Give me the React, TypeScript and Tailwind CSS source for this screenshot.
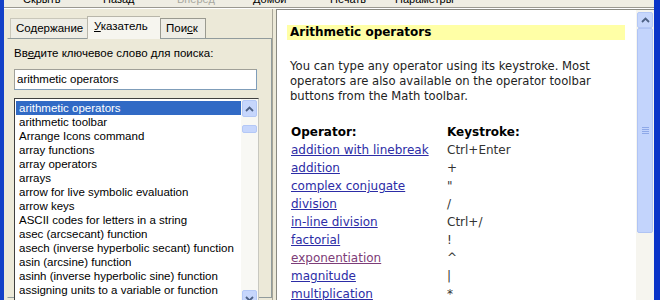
import React from "react";

const items = [
  "arithmetic operators",
  "arithmetic toolbar",
  "Arrange Icons command",
  "array functions",
  "array operators",
  "arrays",
  "arrow for live symbolic evaluation",
  "arrow keys",
  "ASCII codes for letters in a string",
  "asec (arcsecant) function",
  "asech (inverse hyperbolic secant) function",
  "asin (arcsine) function",
  "asinh (inverse hyperbolic sine) function",
  "assigning units to a variable or function",
  "assigning values to a variable or function",
];

const ops: [string, string, boolean?][] = [
  ["addition with linebreak", "Ctrl+Enter"],
  ["addition", "+"],
  ["complex conjugate", "\""],
  ["division", "/"],
  ["in-line division", "Ctrl+/"],
  ["factorial", "!"],
  ["exponentiation", "^", true],
  ["magnitude", "|"],
  ["multiplication", "*"],
];

function UpArrow() {
  return (
    <svg width="9" height="6" viewBox="0 0 9 6">
      <path d="M1 5 L4.5 1.5 L8 5" fill="none" stroke="#4d6185" strokeWidth="1.8" />
    </svg>
  );
}
function DownArrow() {
  return (
    <svg width="9" height="6" viewBox="0 0 9 6">
      <path d="M1 1 L4.5 4.5 L8 1" fill="none" stroke="#4d6185" strokeWidth="1.8" />
    </svg>
  );
}

export default function App() {
  return (
    <div className="w-[660px] h-[300px] overflow-hidden flex bg-[#0a3fd0]">
      <div className="w-[4px] shrink-0 bg-[#1441c8]" />
      <div className="flex-1 flex flex-col bg-[#ece9d8] overflow-hidden">
        {/* toolbar */}
        <div className="h-[8px] shrink-0 overflow-hidden bg-[#efede3] border-b border-[#9a9890]">
          <div className="flex mt-[-8px] leading-[14px] text-[11px] text-black font-['Liberation_Sans',sans-serif] pl-[19px]">
            <span className="w-[80px]">Скрыть</span>
            <span className="w-[74px]">Назад</span>
            <span className="w-[76px] text-[#a8a8a0]">Вперед</span>
            <span className="w-[77px]">Домой</span>
            <span className="w-[65px]">Печать</span>
            <span>Параметры</span>
          </div>
        </div>
        <div className="flex-1 flex min-h-0 border-t border-white">
          {/* left pane */}
          <div className="w-[268px] shrink-0 pl-[3px] pt-[7px] font-['Liberation_Sans',sans-serif] text-[11.5px] text-black">
            {/* tabs */}
            <div className="flex items-end h-[22px] pl-[3px]">
              <div className="h-[20px] w-[77px] flex items-center pl-[5px] border-t border-l border-[#c9c7ba] bg-[#eeede5]">
                Содержание
              </div>
              <div className="h-[23px] w-[73px] flex items-center pl-[6px] pb-[3px] bg-[#f6f5ef] border-t border-l border-[#b8b6aa] relative top-[1px] z-10">
                <span><span className="underline">У</span>казатель</span>
              </div>
              <div className="h-[20px] w-[46px] flex items-center pl-[5px] border-t border-l border-r border-[#9a9a90] bg-[#eeede5]">
                <span>Пои<span className="underline">с</span>к</span>
              </div>
            </div>
            <div className="border border-[#919b9c] border-l-[#ece9d8] h-[260px] pl-[6px] pr-[8px] pt-[7px]">
              <div className="h-[14px] leading-[14px]">
                Вв<span className="underline">е</span>дите ключевое слово для поиска:
              </div>
              <div className="mt-[9px] w-[243px] h-[21px] bg-white border border-[#7f9db9] border-t-[#a0a098] border-l-[#a0a098] pl-[2px] leading-[19px]">
                arithmetic operators
              </div>
              <div className="mt-[8px] w-[245px] h-[210px] bg-white border border-[#404040] border-r-[#c8c8c0] border-b-[#c8c8c0] flex">
                <div className="flex-1 pl-[1px] pt-[2px]">
                  {items.map((t, i) => (
                    <div
                      key={i}
                      className={
                        i === 0
                          ? "h-[14px] leading-[14px] pl-[3px] bg-[#316ac5] text-white"
                          : "h-[14px] leading-[14px] pl-[3px] whitespace-nowrap"
                      }
                    >
                      {t}
                    </div>
                  ))}
                </div>
                <div className="w-[17px] shrink-0 bg-[#f8f8f4] flex flex-col pt-[1px]">
                  <div className="h-[17px] mx-[1px] rounded-[2px] bg-[#c6d6fc] border border-[#b4c8f6] flex items-center justify-center">
                    <UpArrow />
                  </div>
                  <div className="h-[8px] mt-[8px] mx-[1px] rounded-[2px] bg-[#c6d6fc] border border-[#b4c8f6]" />
                  <div className="flex-1" />
                  <div className="h-[17px] mx-[1px] rounded-[2px] bg-[#c6d6fc] border border-[#b4c8f6] flex items-center justify-center">
                    <DownArrow />
                  </div>
                </div>
              </div>
            </div>
          </div>
          {/* splitter */}
          <div className="w-[4px] shrink-0 border-l border-[#a8a698]" />
          {/* right pane */}
          <div className="flex-1 flex border-l border-t border-[#8a8a82] bg-white min-w-0">
            <div className="flex-1 pl-[10px] pr-[11px] pt-[15px] font-['DejaVu_Sans',sans-serif] text-[12px] text-black">
              <div className="bg-[#ffffa6] h-[15px] leading-[15px] pl-[3px] font-bold">Arithmetic operators</div>
              <div className="mt-[19px] pl-[3px] w-[335px] leading-[15px] text-[11.6px] text-[#222]">
                You can type any operator using its keystroke. Most operators are also available on the operator toolbar buttons from the Math toolbar.
              </div>
              <div className="mt-[19px] pl-[4px]">
                <div className="flex h-[18px] leading-[18px] font-bold">
                  <div className="w-[156px]">Operator:</div>
                  <div>Keystroke:</div>
                </div>
                {ops.map(([o, k, v], i) => (
                  <div key={i} className="flex h-[18px] leading-[18px]">
                    <div className="w-[156px]">
                      <span className={v ? "underline text-[#7d3d78]" : "underline text-[#2c2ca6]"}>{o}</span>
                    </div>
                    <div className="text-[#333]">{k}</div>
                  </div>
                ))}
              </div>
            </div>
            <div className="w-[18px] shrink-0 bg-[#f6f5ef] flex flex-col pt-[2px]">
              <div className="h-[16px] mx-[1px] rounded-[2px] bg-[#c6d6fc] border border-[#b4c8f6] flex items-center justify-center">
                <UpArrow />
              </div>
              <div className="h-[205px] mx-[1px] rounded-[2px] bg-[#c3d4fc] border border-[#b0c4f4] flex flex-col items-center justify-center gap-[1px]">
                <div className="w-[7px] h-[1px] bg-[#8ea8e8]" />
                <div className="w-[7px] h-[1px] bg-[#8ea8e8]" />
                <div className="w-[7px] h-[1px] bg-[#8ea8e8]" />
                <div className="w-[7px] h-[1px] bg-[#8ea8e8]" />
              </div>
            </div>
          </div>
        </div>
      </div>
      <div className="w-[6px] shrink-0 bg-[#0a34c8]" />
    </div>
  );
}
